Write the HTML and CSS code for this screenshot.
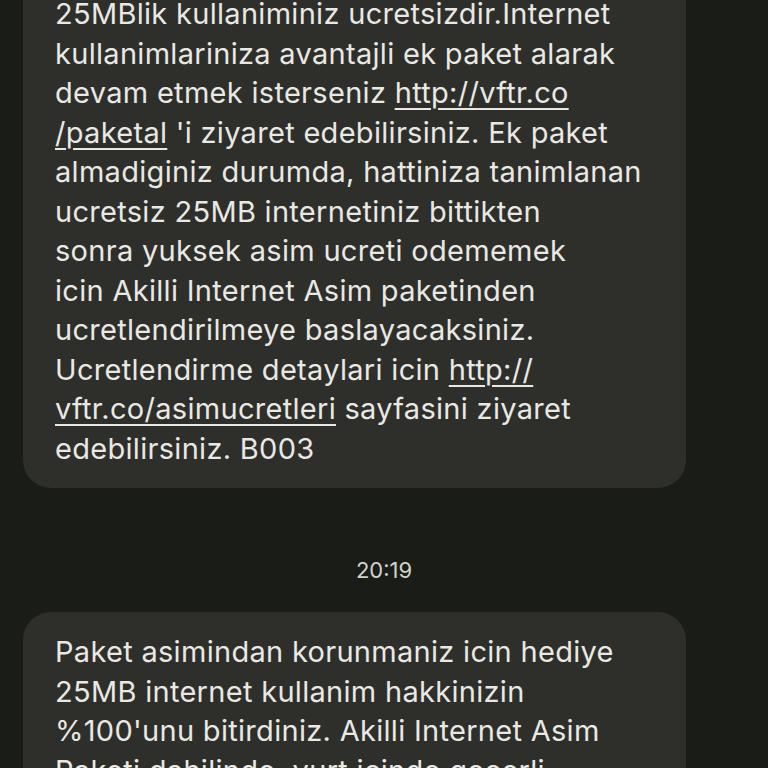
FILE: index.html
```html
<!DOCTYPE html>
<html lang="tr">
<head>
<meta charset="utf-8">
<link rel="stylesheet" href="styles.css">
</head>
<body>
<div class="thread">
  <div class="bubble first">
    <p class="msg">25MBlik kullaniminiz ucretsizdir.Internet<br>kullanimlariniza avantajli ek paket alarak<br>devam etmek isterseniz <a href="#">http://vftr.co<br>/paketal</a> 'i ziyaret edebilirsiniz. Ek paket<br>almadiginiz durumda, hattiniza tanimlanan<br>ucretsiz 25MB internetiniz bittikten<br>sonra yuksek asim ucreti odememek<br>icin Akilli Internet Asim paketinden<br>ucretlendirilmeye baslayacaksiniz.<br>Ucretlendirme detaylari icin <a href="#">http://<br>vftr.co/asimucretleri</a> sayfasini ziyaret<br>edebilirsiniz. B003</p>
  </div>
  <div class="time">20:19</div>
  <div class="bubble">
    <p class="msg">Paket asimindan korunmaniz icin hediye<br>25MB internet kullanim hakkinizin<br>%100'unu bitirdiniz. Akilli Internet Asim<br>Paketi dahilinde, yurt icinde gecerli</p>
  </div>
</div>
</body>
</html>
```
FILE: styles.css
```css
html, body {
  margin: 0;
  padding: 0;
  background: #1a1c18;
  overflow: hidden;
  height: 768px;
}
.thread {
  display: flex;
  flex-direction: column;
  align-items: flex-start;
  padding-left: 23px;
}
.bubble {
  width: 663px;
  box-sizing: border-box;
  background: #2e2f2b;
  border-radius: 28px;
  padding: 20px 20px 20px 32px;
}
.bubble.first {
  margin-top: -26px;
}
.msg {
  margin: 0;
  font-family: Inter, Roboto, sans-serif;
  font-size: 29px;
  letter-spacing: 0.3px;
  line-height: 39.5px;
  color: #e9e8e3;
  white-space: nowrap;
}
.msg a {
  color: #e9e8e3;
  text-decoration: underline;
  text-decoration-thickness: 2px;
  text-underline-offset: 5px;
}
.time {
  align-self: stretch;
  margin-left: -23px;
  text-align: center;
  font-family: Inter, Roboto, sans-serif;
  font-size: 22px;
  color: #d2d2cc;
  height: 124px;
  line-height: 164px;
}
```
